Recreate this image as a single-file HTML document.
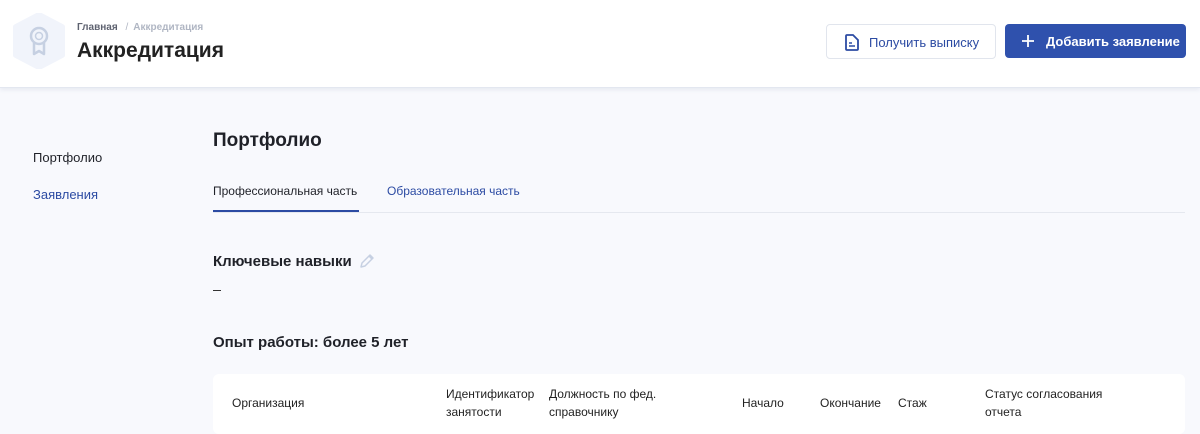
<!DOCTYPE html>
<html><head><meta charset="utf-8"><style>
*{margin:0;padding:0;box-sizing:border-box}
body{width:1200px;height:427px;overflow:hidden;background:#f8f9fd;font-family:"Liberation Sans",sans-serif;color:#1f2128;position:relative}
.hdr{position:absolute;left:0;top:0;width:1200px;height:88px;background:#fff;border-bottom:1px solid #e3e7f0;box-shadow:0 2px 4px rgba(40,60,110,.08)}
.a{position:absolute;white-space:nowrap}
.btn1{position:absolute;left:826px;top:24px;width:170px;height:35px;border:1px solid #e1e5ed;border-radius:4px;background:#fff;color:#2c4ba3;font-size:13px}
.btn2{position:absolute;left:1005px;top:24px;width:181px;height:34px;border-radius:4px;background:#2f51ad;color:#fff;font-size:13px;font-weight:bold}
.th{position:absolute;font-size:12px;line-height:18px;color:#222}
</style></head><body>
<div class="hdr">
<svg class="a" style="left:13px;top:13px" width="52" height="56" viewBox="0 0 52 56"><polygon points="26,2 49,14 49,42 26,54 3,42 3,14" fill="#f1f4fb" stroke="#f1f4fb" stroke-width="6" stroke-linejoin="round"/><circle cx="26" cy="23" r="8" fill="none" stroke="#c6d0e2" stroke-width="2.5"/><circle cx="26" cy="23" r="3.5" fill="none" stroke="#c6d0e2" stroke-width="1.5"/><path d="M21 30v11l5-3 5 3V30" fill="none" stroke="#c6d0e2" stroke-width="2.5" stroke-linejoin="round"/></svg>
<div class="a" style="left:77px;top:22px;font-size:10px;font-weight:bold;color:#5e6270">Главная <span style="color:#b0b6c3;font-weight:normal;margin:0 5px">/</span><span style="color:#b0b6c3">Аккредитация</span></div>
<div class="a" style="left:77px;top:39px;font-size:21px;font-weight:bold;color:#222">Аккредитация</div>
</div>
<div class="btn1"><svg class="a" style="left:18px;top:9px" width="14" height="17" viewBox="0 0 14 17"><path d="M2 1h6l5 5v9a1 1 0 0 1-1 1H2a1 1 0 0 1-1-1V2a1 1 0 0 1 1-1z" fill="none" stroke="#2c4ba3" stroke-width="1.8"/><path d="M4 9h3M4 12h6" stroke="#2c4ba3" stroke-width="1.6"/></svg><span class="a" style="left:42px;top:10px">Получить выписку</span></div>
<div class="btn2"><svg class="a" style="left:17px;top:11px" width="12" height="12" viewBox="0 0 12 12"><path d="M6 0v12M0 6h12" stroke="#fff" stroke-width="1.8"/></svg><span class="a" style="left:41px;top:10px">Добавить заявление</span></div>
<div class="a" style="left:33px;top:150px;font-size:13px">Портфолио</div>
<div class="a" style="left:33px;top:187px;font-size:13px;color:#2c4ba3">Заявления</div>
<div class="a" style="left:213px;top:130px;font-size:19px;font-weight:bold">Портфолио</div>
<div class="a" style="left:213px;top:184px;font-size:12px">Профессиональная часть</div>
<div class="a" style="left:213px;top:210px;width:146px;height:2px;background:#2c4ba3"></div>
<div class="a" style="left:387px;top:184px;font-size:12px;color:#2c4ba3">Образовательная часть</div>
<div class="a" style="left:213px;top:212px;width:972px;height:1px;background:#e5e8ef"></div>
<div class="a" style="left:213px;top:253px;font-size:15px;font-weight:bold">Ключевые навыки</div>
<svg class="a" style="left:358px;top:252px" width="18" height="18" viewBox="0 0 18 18"><path d="M3 15l1-4 8-8 3 3-8 8z M11 4l3 3" fill="none" stroke="#c6d0e2" stroke-width="1.5" stroke-linejoin="round"/></svg>
<div class="a" style="left:213px;top:290px;width:8px;height:1px;background:#333"></div>
<div class="a" style="left:213px;top:334px;font-size:15px;font-weight:bold">Опыт работы: более 5 лет</div>
<div class="a" style="left:213px;top:374px;width:972px;height:60px;background:#fff;border-radius:6px"></div>
<div class="th" style="left:232px;top:394px">Организация</div>
<div class="th" style="left:446px;top:385px">Идентификатор<br>занятости</div>
<div class="th" style="left:549px;top:385px">Должность по фед.<br>справочнику</div>
<div class="th" style="left:742px;top:394px">Начало</div>
<div class="th" style="left:820px;top:394px">Окончание</div>
<div class="th" style="left:898px;top:394px">Стаж</div>
<div class="th" style="left:985px;top:385px">Статус согласования<br>отчета</div>
</body></html>
